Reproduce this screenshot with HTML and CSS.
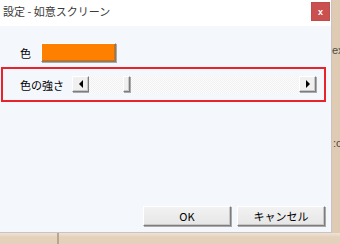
FILE: index.html
```html
<!DOCTYPE html>
<html lang="ja">
<head>
<meta charset="utf-8">
<link rel="stylesheet" href="styles.css">
</head>
<body>
<div class="desk">
  <div class="dialog">
    <div class="titlebar">
      <span class="title">設定 - 如意スクリーン</span>
      <button class="close">x</button>
    </div>
    <div class="content">
      <div class="row color-row">
        <span class="label">色</span>
        <button class="btn swatch"></button>
      </div>
      <div class="row strength-row">
        <span class="label">色の強さ</span>
        <div class="scrollbar">
          <button class="btn arrow"><span class="tri left"></span></button>
          <div class="track">
            <div class="btn thumb"></div>
          </div>
          <button class="btn arrow"><span class="tri right"></span></button>
        </div>
      </div>
      <div class="spacer"></div>
      <div class="actions">
        <button class="btn action">OK</button>
        <button class="btn action">キャンセル</button>
      </div>
    </div>
  </div>
  <div class="side">
    <div class="frag frag1">ex</div>
    <div class="frag frag2">:co</div>
  </div>
  <div class="bottom"><div class="seam"></div></div>
</div>
</body>
</html>
```

FILE: styles.css
```css
* { box-sizing: border-box; }
html, body { margin: 0; padding: 0; }
body {
  width: 340px;
  height: 244px;
  overflow: hidden;
  background: #e4d1bc;
  font-family: "Noto Sans CJK JP", "Liberation Sans", sans-serif;
}
.desk {
  display: grid;
  grid-template-columns: 332px 8px;
  grid-template-rows: 233px 11px;
}
.dialog {
  display: flex;
  flex-direction: column;
  background: #fff;
  border-right: 1px solid #c9c4bf;
  border-bottom: 1px solid #c9c4bf;
}
.titlebar {
  height: 26px;
  display: flex;
  justify-content: space-between;
  align-items: flex-start;
  background: #fff;
}
.title {
  margin: 3px 0 0 3px;
  font-size: 11px;
  line-height: 16px;
  color: #3a3a3a;
}
.close {
  width: 19px;
  height: 19px;
  margin: 2px 1px 0 0;
  padding: 0;
  border: 1px solid #c24a4a;
  background: #c9504f;
  color: #fff;
  font: bold 9px/16px "Liberation Sans", sans-serif;
}
.content {
  flex: 1;
  display: flex;
  flex-direction: column;
  background: #f4f7fc;
  padding-top: 17px;
}
.row {
  display: flex;
  align-items: center;
}
.label {
  font-size: 11px;
  line-height: 14px;
  color: #000;
}
.btn {
  background: #f0f0f0;
  border: 1px solid;
  border-color: #ffffff #7d7d7d #7d7d7d #ffffff;
  box-shadow: 1px 1px 0 #a9a9a9, inset -1px -1px 0 #c8c8c8;
  padding: 0;
}
.color-row {
  padding-left: 20px;
  height: 19px;
}
.swatch {
  width: 75px;
  height: 19px;
  margin-left: 10px;
  background: #ff8000;
  box-shadow: 1px 1px 0 #a9a9a9, inset -1px -1px 0 #d87000;
}
.strength-row {
  margin: 5px 5px 0 1px;
  height: 35px;
  border: 2px solid #e8232b;
  padding-left: 17px;
}
.scrollbar {
  margin-left: 8px;
  width: 244px;
  height: 17px;
  display: flex;
}
.arrow {
  width: 17px;
  height: 16px;
  display: flex;
  align-items: center;
  justify-content: center;
}
.tri {
  width: 0;
  height: 0;
  border-top: 4px solid transparent;
  border-bottom: 4px solid transparent;
}
.tri.left { border-right: 4px solid #000; }
.tri.right { border-left: 4px solid #000; }
.track {
  flex: 1;
  height: 17px;
  background: repeating-conic-gradient(#f1f1f1 0 25%, #fcfcfc 0 50%) 0 0 / 2px 2px;
  padding-left: 34px;
}
.thumb {
  width: 7px;
  height: 16px;
}
.spacer { flex: 1; }
.actions {
  display: flex;
  justify-content: flex-end;
  gap: 6px;
  padding: 0 6px 6px 0;
}
.action {
  width: 88px;
  height: 20px;
  font-size: 11px;
  line-height: 16px;
  color: #000;
  font-family: "Noto Sans CJK JP", "Liberation Sans", sans-serif;
  background: linear-gradient(#f2f2f2, #e6e6e6);
}
.side {
  overflow: hidden;
  font: 11px/14px "Liberation Sans", sans-serif;
  color: #4a4a4a;
  padding-top: 43px;
  background: #dfcab4;
}
.frag { white-space: nowrap; }
.frag2 { margin-top: 79px; padding-left: 1px; }
.bottom {
  grid-column: 1 / 3;
  background: linear-gradient(#efe3d6, #e4d1bc 4px);
}
.seam {
  margin-left: 57px;
  width: 2px;
  height: 11px;
  background: #b9a592;
}
```
